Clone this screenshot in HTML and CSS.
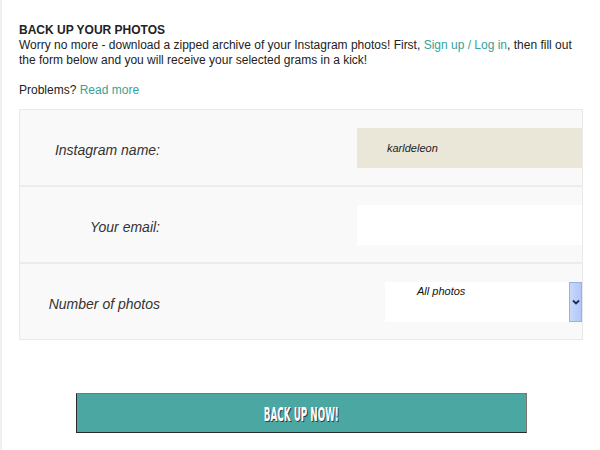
FILE: index.html
```html
<!DOCTYPE html>
<html>
<head>
<meta charset="utf-8">
<link rel="stylesheet" href="styles.css">
</head>
<body>
<div class="page">
  <div class="intro">
    <h1 class="title">BACK UP YOUR PHOTOS</h1>
    <p class="text">Worry no more - download a zipped archive of your Instagram photos! First, <a class="link" href="#">Sign up / Log in</a>, then fill out the form below and you will receive your selected grams in a kick!</p>
    <p class="text">Problems? <a class="link" href="#">Read more</a></p>
  </div>
  <div class="form">
    <div class="row">
      <label class="label">Instagram name:</label>
      <div class="field field-name">karldeleon</div>
    </div>
    <div class="row">
      <label class="label">Your email:</label>
      <div class="field field-email"></div>
    </div>
    <div class="row row-last">
      <label class="label">Number of photos</label>
      <div class="select">
        <span class="select-value">All photos</span>
        <span class="select-btn">
          <svg width="8" height="6" viewBox="0 0 8 6"><path d="M1 1.5 L4 4.5 L7 1.5" fill="none" stroke="#1f2a55" stroke-width="1.8"/></svg>
        </span>
      </div>
    </div>
  </div>
  <div class="actions">
    <button class="btn"><span class="btn-text">BACK UP NOW!</span></button>
  </div>
</div>
</body>
</html>
```
FILE: styles.css
```css
html, body {
  margin: 0;
  padding: 0;
  background: #ffffff;
}
.page {
  border-left: 2px solid #f0f0f0;
  padding: 23px 17px 0 17px;
  min-height: 450px;
  box-sizing: border-box;
  font-family: "Liberation Sans", Arial, sans-serif;
  color: #222;
}
.title {
  margin: 0;
  font-size: 12px;
  line-height: 15px;
  font-weight: bold;
}
.text {
  margin: 0 0 15px 0;
  font-size: 12px;
  line-height: 15px;
}
.link {
  color: #35a29b;
  text-decoration: none;
}
.form {
  margin-top: -4px;
  width: 564px;
  box-sizing: border-box;
  border: 1px solid #e9e9e9;
  background: #f9f9f9;
}
.row {
  display: flex;
  align-items: center;
  height: 75px;
  border-bottom: 2px solid #ececec;
}
.row-last {
  border-bottom: none;
}
.label {
  width: 140px;
  text-align: right;
  font-size: 14px;
  font-style: italic;
  color: #333;
  padding-top: 4px;
}
.field {
  margin-left: auto;
  width: 225px;
  height: 40px;
  box-sizing: border-box;
  padding-left: 30px;
  display: flex;
  align-items: center;
  font-size: 11px;
  font-style: italic;
  color: #222;
}
.field-name {
  background: #ebe7d8;
}
.field-email {
  background: #ffffff;
}
.select {
  margin-left: auto;
  width: 197px;
  height: 40px;
  background: #ffffff;
  display: flex;
  box-sizing: border-box;
}
.select-value {
  flex: 1;
  padding: 3px 0 0 32px;
  font-size: 11px;
  font-style: italic;
  color: #111;
}
.select-btn {
  width: 13px;
  box-sizing: border-box;
  border: 1px solid #97b0ea;
  background: linear-gradient(to right, #c9d8fb, #b2c7f6);
  display: flex;
  align-items: center;
  justify-content: center;
}
.actions {
  display: flex;
  justify-content: center;
  padding-top: 53px;
  width: 564px;
}
.btn {
  width: 451px;
  height: 40px;
  margin-left: 1px;
  background: #4aa7a2;
  border: 1px solid #2a2a2a;
  border-top-color: #7d7474;
  border-right-color: #7d7474;
  padding: 0;
  cursor: pointer;
}
.btn-text {
  display: inline-block;
  font-family: "DejaVu Sans", sans-serif;
  font-weight: bold;
  font-size: 20px;
  color: #ffffff;
  transform: scaleX(0.44);
  text-shadow: 2px 1px 0 #2c3e3d;
  padding-top: 2px;
}
```
